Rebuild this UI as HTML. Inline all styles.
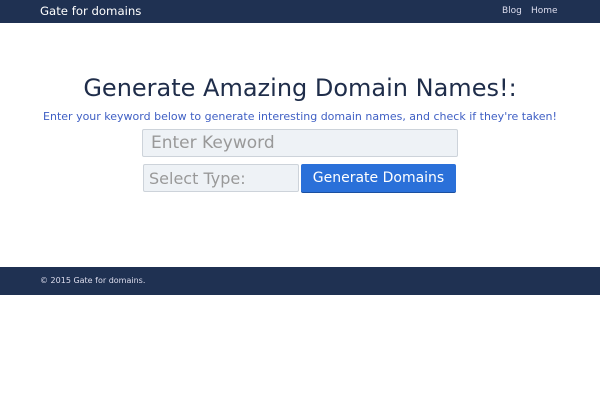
<!DOCTYPE html>
<html><head><style>
body{margin:0;width:600px;height:400px;background:#fff;font-family:"DejaVu Sans","Liberation Sans",sans-serif;position:relative;overflow:hidden}
.nav{position:absolute;left:0;top:0;width:600px;height:23px;background:#1f3152}
.brand{position:absolute;left:40px;top:4px;color:#fff;font-size:11.7px}
.nl{position:absolute;top:6px;color:#dde;font-size:9px}
h1{position:absolute;left:0;width:600px;top:74px;margin:0;text-align:center;font-weight:normal;font-size:24px;color:#1f2d4a}
.sub{position:absolute;left:0;width:600px;top:110px;text-align:center;font-size:11px;color:#3f5fc4}
.in{position:absolute;box-sizing:border-box;background:#eef2f6;border:1px solid #cdd3da;border-radius:2px;color:#999;font-size:17px}
.btn{position:absolute;left:301px;top:164px;width:155px;height:28px;background:#2a70d9;border-radius:2px;color:#fff;font-size:14px;text-align:center;line-height:28px;box-shadow:0 1px 0 #1a4fa0}
.foot{position:absolute;left:0;top:267px;width:600px;height:28px;background:#1f3152}
.foot span{position:absolute;left:40px;top:9px;color:#dde;font-size:8px}
</style></head><body>
<div class="nav"><div class="brand">Gate for domains</div><div class="nl" style="left:502px">Blog</div><div class="nl" style="left:531px">Home</div></div>
<h1>Generate Amazing Domain Names!:</h1>
<div class="sub">Enter your keyword below to generate interesting domain names, and check if they're taken!</div>
<div class="in" style="left:142px;top:129px;width:316px;height:28px;padding:3px 0 0 8px">Enter Keyword</div>
<div class="in" style="left:143px;top:164px;width:156px;height:28px;padding:4px 0 0 5px;font-size:16px">Select Type:</div>
<div class="btn">Generate Domains</div>
<div class="foot"><span>© 2015 Gate for domains.</span></div>
</body></html>
